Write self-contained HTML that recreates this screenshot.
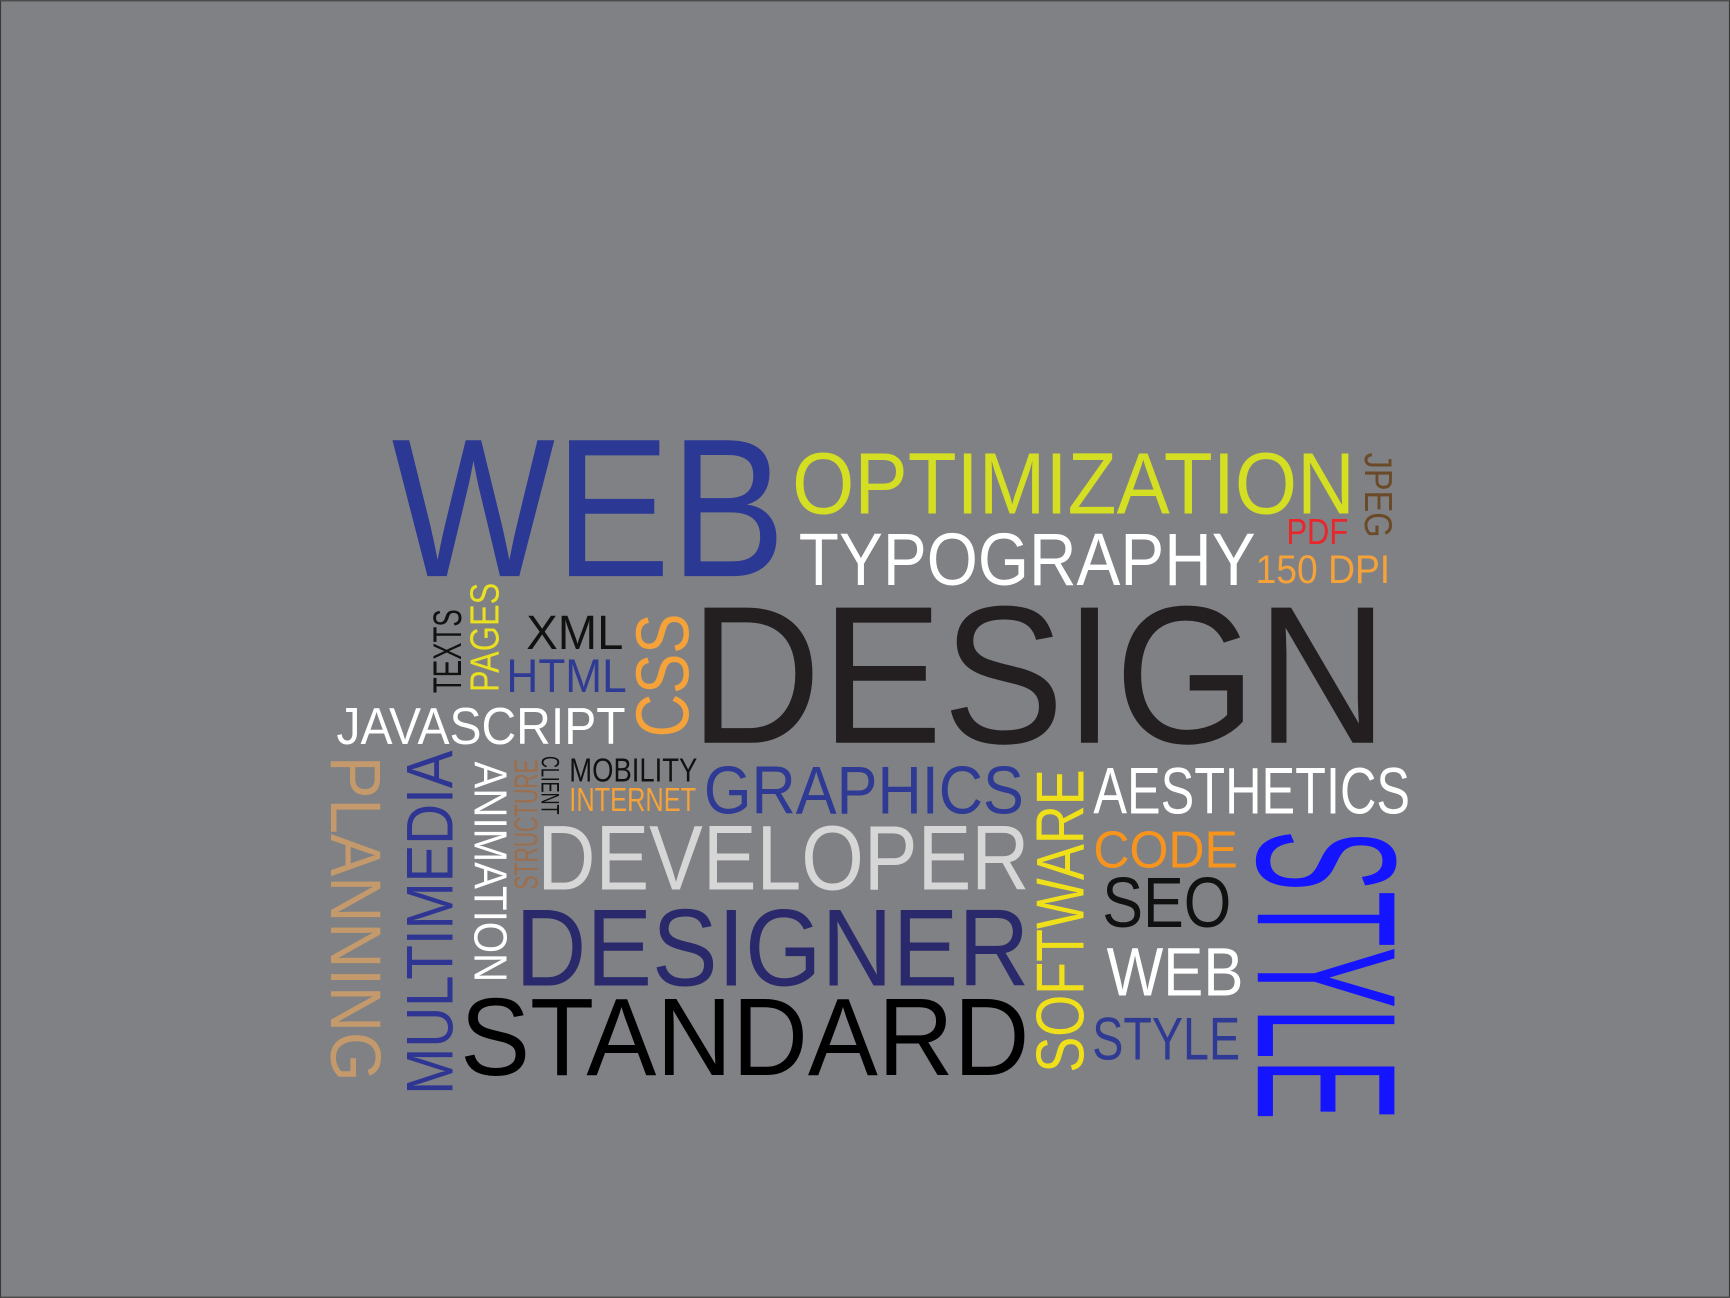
<!DOCTYPE html>
<html><head><meta charset="utf-8"><style>
html,body{margin:0;padding:0;background:#808184;}
svg{display:block;}
text{font-family:"Liberation Sans",sans-serif;}
</style></head><body>
<svg width="1730" height="1298" viewBox="0 0 1568 1176" xmlns="http://www.w3.org/2000/svg">
<rect x="0.5" y="0.5" width="1567" height="1175" fill="#808184" stroke="#3a3a3a" stroke-width="1"/>
<g>
<text x="355" y="522" font-size="179" fill="#2b3894" textLength="357" lengthAdjust="spacingAndGlyphs">WEB</text>
<text x="718" y="465" font-size="79" fill="#d4de22" textLength="510" lengthAdjust="spacingAndGlyphs">OPTIMIZATION</text>
<text x="1166" y="493" font-size="33" fill="#e8262b" textLength="56" lengthAdjust="spacingAndGlyphs">PDF</text>
<text x="724" y="530" font-size="67" fill="#ffffff" textLength="414" lengthAdjust="spacingAndGlyphs">TYPOGRAPHY</text>
<text x="1138" y="528" font-size="36" fill="#f5a23a" textLength="122" lengthAdjust="spacingAndGlyphs">150 DPI</text>
<text x="625" y="673" font-size="178" fill="#231f20" textLength="633" lengthAdjust="spacingAndGlyphs">DESIGN</text>
<text x="477" y="588" font-size="44" fill="#111" textLength="88" lengthAdjust="spacingAndGlyphs">XML</text>
<text x="459" y="627" font-size="43" fill="#2e3a94" textLength="109" lengthAdjust="spacingAndGlyphs">HTML</text>
<text x="305" y="674" font-size="47" fill="#ffffff" textLength="262" lengthAdjust="spacingAndGlyphs">JAVASCRIPT</text>
<text x="516" y="708" font-size="30" fill="#111" textLength="116" lengthAdjust="spacingAndGlyphs">MOBILITY</text>
<text x="516" y="735" font-size="30" fill="#f5a23a" textLength="115" lengthAdjust="spacingAndGlyphs">INTERNET</text>
<text x="638" y="737" font-size="61" fill="#2e3a94" textLength="290" lengthAdjust="spacingAndGlyphs">GRAPHICS</text>
<text x="991" y="737" font-size="60" fill="#ffffff" textLength="287" lengthAdjust="spacingAndGlyphs">AESTHETICS</text>
<text x="487" y="806" font-size="83" fill="#d6d6d6" textLength="446" lengthAdjust="spacingAndGlyphs">DEVELOPER</text>
<text x="991" y="786" font-size="47" fill="#f7941d" textLength="131" lengthAdjust="spacingAndGlyphs">CODE</text>
<text x="999" y="840" font-size="65" fill="#111" textLength="117" lengthAdjust="spacingAndGlyphs">SEO</text>
<text x="467" y="893" font-size="99" fill="#29296b" textLength="466" lengthAdjust="spacingAndGlyphs">DESIGNER</text>
<text x="1003" y="902" font-size="62" fill="#ffffff" textLength="124" lengthAdjust="spacingAndGlyphs">WEB</text>
<text x="417" y="974" font-size="100" fill="#000" textLength="516" lengthAdjust="spacingAndGlyphs">STANDARD</text>
<text x="990" y="960" font-size="55" fill="#2e3a94" textLength="134" lengthAdjust="spacingAndGlyphs">STYLE</text>

<text transform="translate(1237,410) rotate(90)" font-size="35" fill="#6b4a2a" textLength="77" lengthAdjust="spacingAndGlyphs">JPEG</text>
<text transform="translate(418,628) rotate(-90)" font-size="36" fill="#111" textLength="76" lengthAdjust="spacingAndGlyphs">TEXTS</text>
<text transform="translate(452,627) rotate(-90)" font-size="37" fill="#e8e020" textLength="99" lengthAdjust="spacingAndGlyphs">PAGES</text>
<text transform="translate(624,668) rotate(-90)" font-size="68" fill="#f5a23a" textLength="112" lengthAdjust="spacingAndGlyphs">CSS</text>
<text transform="translate(300,685) rotate(90)" font-size="65" fill="#c49a6c" textLength="295" lengthAdjust="spacingAndGlyphs">PLANNING</text>
<text transform="translate(410,992) rotate(-90)" font-size="60" fill="#2e3592" textLength="312" lengthAdjust="spacingAndGlyphs">MULTIMEDIA</text>
<text transform="translate(430,690) rotate(90)" font-size="42" fill="#ffffff" textLength="200" lengthAdjust="spacingAndGlyphs">ANIMATION</text>
<text transform="translate(487,806) rotate(-90)" font-size="30" fill="#9c6e4c" textLength="118" lengthAdjust="spacingAndGlyphs">STRUCTURE</text>
<text transform="translate(491,685) rotate(90)" font-size="23" fill="#111" textLength="53" lengthAdjust="spacingAndGlyphs">CLIENT</text>
<text transform="translate(982,972) rotate(-90)" font-size="61" fill="#f0e01a" textLength="275" lengthAdjust="spacingAndGlyphs">SOFTWARE</text>
<text transform="translate(1140,752) rotate(90)" font-size="180" fill="#1414ff" textLength="263" lengthAdjust="spacingAndGlyphs">STYLE</text>
</g>
</svg>
</body></html>
